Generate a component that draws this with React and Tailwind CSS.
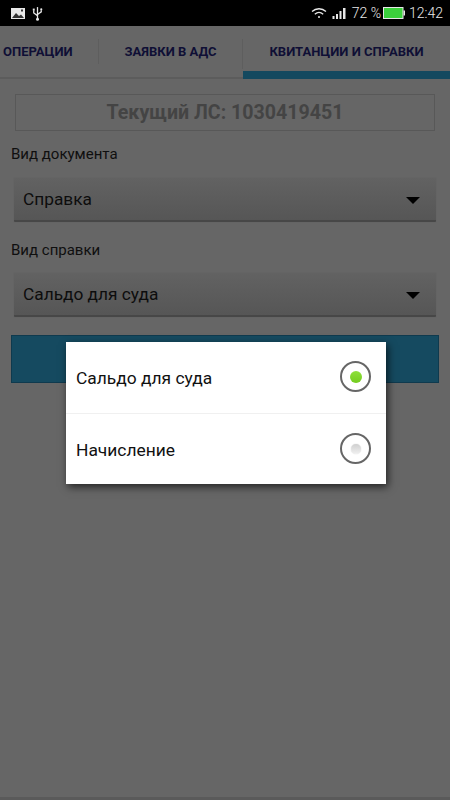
function StatusBar() {
  return (
    <div className="h-[26px] bg-black flex items-center justify-between pl-[11px] pr-[7px] text-[#e8e8e8]">
      <div className="flex items-center gap-[7px]">
        <svg width="14" height="11" viewBox="0 0 14 11">
          <rect x="0" y="0" width="14" height="11" fill="#e8e8e8" />
          <path d="M1 10 L5 5 L8 8 L10 6.5 L13 10 Z" fill="#333" />
          <rect x="10" y="1.5" width="2" height="2" fill="#333" />
        </svg>
        <svg width="11" height="15" viewBox="0 0 10 14" fill="none" stroke="#e8e8e8" strokeWidth="1.2">
          <path d="M5 1 V13" />
          <path d="M1.5 4 V6.5 L5 9" />
          <path d="M8.5 4 V5.5 L5 8" />
          <rect x="0.6" y="2.4" width="1.8" height="1.8" fill="#e8e8e8" stroke="none" />
          <circle cx="8.5" cy="3.2" r="1" fill="#e8e8e8" stroke="none" />
          <circle cx="5" cy="12.3" r="1.4" fill="#e8e8e8" stroke="none" />
        </svg>
      </div>
      <div className="flex items-center text-[14px] font-light leading-none">
        <svg width="16" height="12" viewBox="0 0 16 12" fill="none" stroke="#e8e8e8" strokeWidth="1.3" className="mr-[5px]">
          <path d="M1 4.5 C5 0.8 11 0.8 15 4.5" />
          <path d="M3.8 7.2 C6.3 5 9.7 5 12.2 7.2" />
          <circle cx="8" cy="10" r="1" fill="#e8e8e8" stroke="none" />
        </svg>
        <svg width="15" height="11" viewBox="0 0 14 11" fill="#e8e8e8" className="mr-[5px]">
          <rect x="0" y="8" width="2" height="3" />
          <rect x="3.5" y="6" width="2" height="5" />
          <rect x="7" y="3" width="2" height="8" />
          <rect x="10.5" y="0" width="2.5" height="11" />
        </svg>
        <span>72 %</span>
        <svg width="22" height="12" viewBox="0 0 22 12" className="ml-[2px] mr-[4px]">
          <rect x="0.5" y="0.5" width="19.5" height="11" fill="#3cd13c" stroke="#e8e8e8" />
          <rect x="20.5" y="3.5" width="1.5" height="5" fill="#e8e8e8" />
        </svg>
        <span>12:42</span>
      </div>
    </div>
  );
}

function Tabs() {
  return (
    <div className="h-[53px] flex border-b-2 border-[#5c5c5c] text-[13px] font-bold text-[#0f0f35]">
      <div className="w-[99px] flex items-center pl-[3px]">
        <span className="flex-1">ОПЕРАЦИИ</span>
        <span className="w-px h-[25px] bg-[#5e5e5e]" />
      </div>
      <div className="w-[144px] flex items-center">
        <span className="flex-1 text-center">ЗАЯВКИ В АДС</span>
        <span className="w-px h-[30px] mt-[5px] bg-[#5e5e5e]" />
      </div>
      <div className="flex-1 flex items-center justify-center border-b-[8px] border-[#14495f] pt-[7px] -mb-[2px]">
        КВИТАНЦИИ И СПРАВКИ
      </div>
    </div>
  );
}

function Select({ value }) {
  return (
    <div className="mx-[3px] h-[44px] flex items-center justify-between pl-[9px] pr-[16px] pt-[2px] rounded-[1px] bg-gradient-to-b from-[#626262] to-[#565656] border-b-2 border-[#474747] shadow-[0_0_1px_#555] text-[17.3px] text-[#0d0d0d]">
      <span>{value}</span>
      <span className="w-0 h-0 border-x-[7px] border-x-transparent border-t-[7px] border-t-black" />
    </div>
  );
}

function Radio({ on }) {
  return (
    <span className="mb-[2px] w-[31px] h-[31px] rounded-full border-2 border-[#666666] flex items-center justify-center">
      {on ? (
        <span className="w-[12px] h-[12px] rounded-full bg-gradient-to-b from-[#8ee03a] to-[#74cc1e]" />
      ) : (
        <span className="w-[10px] h-[10px] rounded-full bg-gradient-to-b from-[#cfcfcf] to-[#f0f0f0] shadow-[0_0_1px_#bbbbbb]" />
      )}
    </span>
  );
}

function Option({ label, on }) {
  return (
    <div className="h-[71px] flex items-center justify-between pl-[10px] pr-[15px] text-[17.4px] text-[#111]">
      <span className="mt-[2px]">{label}</span>
      <Radio on={on} />
    </div>
  );
}

export default function App() {
  return (
    <div className="relative w-[450px] h-[800px] overflow-hidden bg-[#666666] font-['Roboto',sans-serif]">
      <StatusBar />
      <Tabs />
      <div className="px-[11px] pt-[15px]">
        <div className="mx-[4px] h-[37px] border border-[#585858] flex items-center justify-center text-[19.6px] font-bold text-[#444444]">
          Текущий ЛС: 1030419451
        </div>
        <div className="mt-[15px] mb-[15px] text-[15px] leading-[17px] text-[#0f0f0f]">Вид документа</div>
        <Select value="Справка" />
        <div className="mt-[20px] mb-[14px] text-[15px] leading-[17px] text-[#0f0f0f]">Вид справки</div>
        <Select value="Сальдо для суда" />
        <div className="mt-[18px] h-[48px] bg-[#154a60] border border-[#0f3a4e]" />
      </div>
      <div className="absolute left-[66px] top-[342px] w-[320px] h-[142px] bg-white shadow-[2px_3px_8px_rgba(0,0,0,0.65)]">
        <Option label="Сальдо для суда" on />
        <div className="h-px bg-[#f0f0f0]" />
        <Option label="Начисление" />
      </div>
      <div className="absolute left-0 right-0 bottom-0 h-[3px] bg-[#5a5a5a]" />
    </div>
  );
}
